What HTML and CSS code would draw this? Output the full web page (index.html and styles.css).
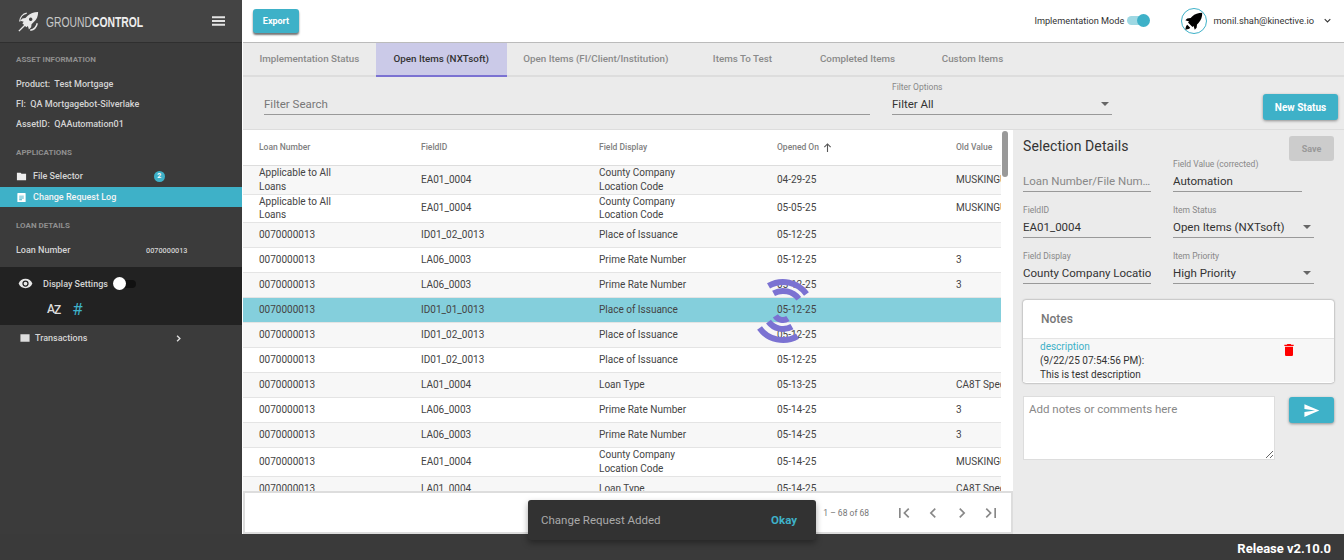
FILE: index.html
```html
<!DOCTYPE html>
<html lang="en">
<head>
  <meta charset="UTF-8">
  <title>GroundControl - Change Request Log</title>
  <link rel="stylesheet" href="styles.css">
</head>
<body>

  <div class="app">
    <aside class="sidebar">
      <div class="brand">
        <svg class="brand-logo" viewBox="0 0 24 24" width="21" height="21">
          <path fill="#e8e8e8" d="M23 1c-5 0-9 1.500-12 4.500L8.500 8 5 8.500 2.500 11l4 1.200L5 14l4.500 4.500 1.800-1.500 1.200 4 2.500-2.500.5-3.500 2.500-2.500C21.500 9.500 23 6 23 1zM16.500 9.500a2 2 0 1 1 0-.01z"/>
          <path fill="none" stroke="#e8e8e8" stroke-width="1.600" d="M1 23L8 16M10 2.500A10 10 0 0 0 2 12M22 14a10 10 0 0 1-8 8"/>
        </svg>
        <div class="brand-box"><span class="brand-name">GROUND<b>CONTROL</b></span></div>
        <svg class="menu-icon" viewBox="0 0 14 10" width="13" height="10"><path fill="#e4e4e4" d="M0 0h14v2H0zM0 4h14v2H0zM0 8h14v2H0z"/></svg>
      </div>

      <h4 class="side-title first">Asset Information</h4>
      <p class="side-line">Product:&nbsp; Test Mortgage</p>
      <p class="side-line">FI:&nbsp; QA Mortgagebot-Silverlake</p>
      <p class="side-line">AssetID:&nbsp; QAAutomation01</p>

      <h4 class="side-title apps">Applications</h4>
      <a class="side-link">
        <svg viewBox="0 0 24 24" width="11" height="11"><path fill="#eee" d="M10 4H2v16h20V6H12z"/></svg>
        File Selector
        <span class="side-badge">2</span>
      </a>
      <a class="side-link active">
        <svg viewBox="0 0 24 24" width="11" height="11"><path fill="#fff" d="M4 2h16a1 1 0 0 1 1 1v18a1 1 0 0 1-1 1H4a1 1 0 0 1-1-1V3a1 1 0 0 1 1-1zm3 6v2h10V8zm0 4v2h10v-2zm0 4v2h6v-2z"/></svg>
        Change Request Log
      </a>

      <h4 class="side-title loan">Loan Details</h4>
      <div class="loan-row"><span>Loan Number</span><b>0070000013</b></div>

      <div class="display-box">
        <div class="display-row">
          <svg viewBox="0 0 24 24" width="15" height="15"><path fill="#e8e8e8" d="M12 4.500C7 4.500 2.700 7.600 1 12c1.700 4.400 6 7.500 11 7.500s9.300-3.100 11-7.500c-1.700-4.400-6-7.500-11-7.500zM12 17a5 5 0 1 1 0-10 5 5 0 0 1 0 10zm0-8a3 3 0 1 0 0 6 3 3 0 0 0 0-6z"/></svg>
          <span>Display Settings</span>
          <span class="side-toggle"><i></i></span>
        </div>
        <div class="sort-row">
          <span class="sort-az">A<span>Z</span></span>
          <span class="sort-num">#</span>
        </div>
      </div>

      <a class="trans-row">
        <svg viewBox="0 0 24 24" width="10" height="10"><path fill="#ddd" d="M1 3h22v18H1z"/></svg>
        <span>Transactions</span>
        <svg class="trans-arrow" viewBox="0 0 10 10" width="7" height="7"><path fill="none" stroke="#ddd" stroke-width="2" d="M3 1l4 4-4 4"/></svg>
      </a>
    </aside>

    <main class="main">
      <header class="topbar">
        <button class="btn export-btn">Export</button>
        <div class="topbar-right">
          <span class="mode-label">Implementation Mode</span>
          <span class="mode-toggle"><i></i></span>
          <span class="avatar">
            <svg viewBox="0 0 24 24" width="18" height="18"><path fill="#000" d="M23 1c-5.500 0-10 1.500-13.500 5L7.500 8 3 8.500 0.500 11l5 1.500L4 14l6 6 1.500-1.500 1.500 5 2.500-2.500.5-4.500 2-2C21.500 11 23 6.500 23 1zM3 17c-1.500 1-2 3-2.500 6.500C4 23 6 22.500 7 21z"/></svg>
          </span>
          <span class="user-mail">monil.shah@kinective.io</span>
          <svg class="user-arrow" viewBox="0 0 10 6" width="7" height="5"><path fill="none" stroke="#333" stroke-width="1.500" d="M1 1l4 4 4-4"/></svg>
        </div>
      </header>

      <nav class="tabs">
        <a class="tab">Implementation Status</a>
        <a class="tab active">Open Items (NXTsoft)</a>
        <a class="tab">Open Items (FI/Client/Institution)</a>
        <a class="tab">Items To Test</a>
        <a class="tab">Completed Items</a>
        <a class="tab">Custom Items</a>
      </nav>

      <section class="filters">
        <div class="filter-search">Filter Search</div>
        <div class="filter-select">
          <label>Filter Options</label>
          <div class="select-value">Filter All <i class="caret"></i></div>
        </div>
        <button class="btn new-btn">New Status</button>
      </section>

      <section class="content">
        <div class="table-panel">
          <div class="table-scroll">
            <div class="table-wrap">
              <table class="items">
                <thead>
                  <tr>
                    <th>Loan Number</th>
                    <th>FieldID</th>
                    <th>Field Display</th>
                    <th>Opened On <svg viewBox="0 0 10 10" width="9" height="9"><path fill="none" stroke="#555" stroke-width="1.200" d="M5 10V1M1.500 4.500L5 1l3.500 3.500"/></svg></th>
                    <th>Old Value</th>
                  </tr>
                </thead>
                <tbody>
                  <tr class="tall"><td>Applicable to All<br>Loans</td><td>EA01_0004</td><td>County Company<br>Location Code</td><td>04-29-25</td><td>MUSKINGUM</td></tr>
                  <tr class="tall"><td>Applicable to All<br>Loans</td><td>EA01_0004</td><td>County Company<br>Location Code</td><td>05-05-25</td><td>MUSKINGUM</td></tr>
                  <tr><td>0070000013</td><td>ID01_02_0013</td><td>Place of Issuance</td><td>05-12-25</td><td></td></tr>
                  <tr><td>0070000013</td><td>LA06_0003</td><td>Prime Rate Number</td><td>05-12-25</td><td>3</td></tr>
                  <tr><td>0070000013</td><td>LA06_0003</td><td>Prime Rate Number</td><td>05-12-25</td><td>3</td></tr>
                  <tr class="selected"><td>0070000013</td><td>ID01_01_0013</td><td>Place of Issuance</td><td>05-12-25</td><td></td></tr>
                  <tr><td>0070000013</td><td>ID01_02_0013</td><td>Place of Issuance</td><td>05-12-25</td><td></td></tr>
                  <tr><td>0070000013</td><td>ID01_02_0013</td><td>Place of Issuance</td><td>05-12-25</td><td></td></tr>
                  <tr><td>0070000013</td><td>LA01_0004</td><td>Loan Type</td><td>05-13-25</td><td>CA8T Spec</td></tr>
                  <tr><td>0070000013</td><td>LA06_0003</td><td>Prime Rate Number</td><td>05-14-25</td><td>3</td></tr>
                  <tr><td>0070000013</td><td>LA06_0003</td><td>Prime Rate Number</td><td>05-14-25</td><td>3</td></tr>
                  <tr class="tall"><td>0070000013</td><td>EA01_0004</td><td>County Company<br>Location Code</td><td>05-14-25</td><td>MUSKINGUM</td></tr>
                  <tr><td>0070000013</td><td>LA01_0004</td><td>Loan Type</td><td>05-14-25</td><td>CA8T Spec</td></tr>
                </tbody>
              </table>
            </div>
            <div class="scroll-gutter"><div class="scroll-thumb"></div></div>
          </div>
          <div class="pager">
            <span class="pager-range">1 – 68 of 68</span>
            <svg viewBox="0 0 24 24" width="20" height="20"><path fill="#888" d="M6 6h2v12H6zM18.400 7.400L17 6l-6 6 6 6 1.400-1.400L13.800 12z"/></svg>
            <svg viewBox="0 0 24 24" width="20" height="20"><path fill="#888" d="M15.400 7.400L14 6l-6 6 6 6 1.400-1.400L10.800 12z"/></svg>
            <svg viewBox="0 0 24 24" width="20" height="20"><path fill="#888" d="M8.600 16.600L10 18l6-6-6-6-1.400 1.400L13.200 12z"/></svg>
            <svg viewBox="0 0 24 24" width="20" height="20"><path fill="#888" d="M5.600 7.400L7 6l6 6-6 6-1.400-1.400L10.200 12zM16 6h2v12h-2z"/></svg>
          </div>
        </div>

        <div class="details">
          <div class="details-head">
            <h2>Selection Details</h2>
            <button class="btn save-btn">Save</button>
          </div>
          <div class="details-grid">
            <div class="field narrow"><label></label><div class="field-value empty">Loan Number/File Number</div></div>
            <div class="field short"><label>Field Value (corrected)</label><div class="field-value">Automation</div></div>
            <div class="field narrow"><label>FieldID</label><div class="field-value">EA01_0004</div></div>
            <div class="field"><label>Item Status</label><div class="field-value">Open Items (NXTsoft) <i class="caret"></i></div></div>
            <div class="field narrow"><label>Field Display</label><div class="field-value clip">County Company Location Code</div></div>
            <div class="field"><label>Item Priority</label><div class="field-value">High Priority <i class="caret"></i></div></div>
          </div>

          <div class="notes">
            <h3>Notes</h3>
            <div class="note">
              <div>
                <span class="note-type">description</span>
                <p>(9/22/25 07:54:56 PM):</p>
                <p>This is test description</p>
              </div>
              <svg viewBox="0 0 24 24" width="16" height="16"><path fill="#f00" d="M6 19c0 1.100.9 2 2 2h8c1.100 0 2-.9 2-2V7H6zM19 4h-3.500l-1-1h-5l-1 1H5v2h14z"/></svg>
            </div>
          </div>

          <div class="note-input">
            <textarea placeholder="Add notes or comments here"></textarea>
            <button class="btn send-btn">
              <svg viewBox="0 0 24 24" width="17" height="17"><path fill="#fff" d="M2 21l21-9L2 3v7l15 2-15 2z"/></svg>
            </button>
          </div>
        </div>
      </section>
    </main>
  </div>

  <footer class="footer">Release v2.10.0</footer>

  <!-- overlays -->
  <svg class="spinner" viewBox="0 0 70 70" width="70" height="70">
    <g fill="none" stroke="#7b72d2" stroke-width="6" transform="rotate(12 35 35)">
      <path d="M15.600 13.400A29 29 0 0 1 54.400 13.400"/>
      <path d="M22.100 19.700A20 20 0 0 1 47.900 19.700"/>
      <path d="M28.600 41.400A9 9 0 0 0 41.400 41.400"/>
      <path d="M23 48.400A18 18 0 0 0 47 48.400"/>
      <path d="M15.600 56.600A29 29 0 0 0 54.400 56.600"/>
    </g>
  </svg>

  <div class="snackbar">
    <span>Change Request Added</span>
    <b>Okay</b>
  </div>

</body>
</html>
```

FILE: styles.css
```css
* { box-sizing: border-box; margin: 0; padding: 0; }

body {
  font-family: Roboto, Arial, sans-serif;
  height: 560px;
  overflow: hidden;
  background-color: #3a3a3a;
  color: #333;
}

.app {
  display: flex;
  height: 534px;
}

.footer {
  height: 26px;
  background-color: #3a3a3a;
  color: white;
  font-size: 13px;
  font-weight: 700;
  line-height: 30px;
  text-align: right;
  padding-right: 13px;
}

/* sidebar */
.sidebar {
  width: 243px;
  flex-shrink: 0;
  background-color: #3b3b3b;
  color: #d4d4d4;
  border-right: 1px solid #fff;
}

.brand {
  height: 43px;
  display: flex;
  align-items: center;
  padding: 0 17px 0 18px;
  background-color: #444;
  border-bottom: 1px solid #2f2f2f;
}

.brand-box {
  flex-grow: 1;
  margin-left: 7px;
  height: 18px;
  overflow: hidden;
}

.brand-name {
  display: inline-block;
  font-family: "Liberation Sans", Arial, sans-serif;
  font-size: 15px;
  line-height: 18px;
  white-space: nowrap;
  color: #c8c8c8;
  transform: scaleX(0.69);
  transform-origin: left center;
}

.brand-name b { color: #eee; }

.side-title {
  font-size: 8px;
  font-weight: 700;
  text-transform: uppercase;
  color: #8f8f8f;
  padding-left: 16px;
  line-height: 10px;
}

.side-title.first { margin-top: 12px; margin-bottom: 9px; }
.side-title.apps { margin-top: 14px; margin-bottom: 8px; }
.side-title.loan { margin-top: 14px; margin-bottom: 7px; }

.side-line {
  font-size: 9px;
  font-weight: 500;
  padding-left: 16px;
  height: 20px;
  line-height: 20px;
}

.side-link {
  display: flex;
  align-items: center;
  gap: 6px;
  height: 20px;
  padding-left: 16px;
  font-size: 9px;
  font-weight: 500;
}

.side-link.active {
  background-color: #3eb1c8;
  color: #f4f4f4;
  margin-top: 1px;
}

.side-badge {
  width: 11px;
  height: 11px;
  margin-left: 65px;
  border-radius: 50%;
  background-color: #3eb1c8;
  color: white;
  font-size: 7px;
  font-weight: 700;
  line-height: 11px;
  text-align: center;
}

.loan-row {
  display: flex;
  height: 24px;
  align-items: center;
  padding-left: 16px;
  font-size: 9px;
  font-weight: 500;
}

.loan-row span { width: 130px; }
.loan-row b { font-size: 7.300px; font-weight: 500; }

.display-box {
  background-color: #222;
  height: 58px;
  margin-top: 5px;
}

.display-row {
  display: flex;
  align-items: center;
  height: 33px;
  padding-left: 18px;
  font-size: 9px;
  font-weight: 500;
}

.display-row span:first-of-type { margin-left: 10px; }

.side-toggle {
  position: relative;
  width: 22px;
  height: 8px;
  margin-left: 6px;
  background-color: #111;
  border-radius: 4px;
}

.side-toggle i {
  position: absolute;
  left: -1px;
  top: -2.500px;
  width: 13px;
  height: 13px;
  border-radius: 50%;
  background-color: white;
}

.sort-row {
  display: flex;
  align-items: center;
  padding-left: 47px;
  gap: 12px;
  height: 18px;
}

.sort-az {
  font-size: 12px;
  font-weight: 500;
  letter-spacing: -1px;
  color: #ddd;
}

.sort-az span { position: relative; top: 1px; }

.sort-num {
  font-size: 17px;
  color: #3eb1c8;
}

.trans-row {
  display: flex;
  align-items: center;
  height: 26px;
  padding-left: 20px;
  font-size: 9px;
  font-weight: 500;
}

.trans-row span {
  margin-left: 5px;
  width: 140px;
}

/* main */
.main {
  flex-grow: 1;
  display: flex;
  flex-direction: column;
  min-width: 0;
  background-color: #ebebeb;
}

.topbar {
  height: 43px;
  flex-shrink: 0;
  display: flex;
  align-items: center;
  justify-content: space-between;
  padding: 0 13px 1px 10px;
  background-color: white;
  border-bottom: 1px solid #bbb;
}

.btn {
  border: none;
  border-radius: 3px;
  background-color: #3eb1c8;
  color: white;
  font-family: Roboto, Arial, sans-serif;
  font-size: 9px;
  font-weight: 700;
  box-shadow: 0 1px 3px rgba(0, 0, 0, 0.4);
}

.export-btn {
  width: 46px;
  height: 24px;
  box-shadow: 0 2px 2px rgba(0, 0, 0, 0.55);
}

.topbar-right {
  display: flex;
  align-items: center;
}

.mode-label {
  font-size: 9.200px;
  margin-right: 3px;
}

.mode-toggle {
  position: relative;
  width: 22px;
  height: 9px;
  margin-right: 32px;
  background-color: #9ed8e3;
  border-radius: 5px;
}

.mode-toggle i {
  position: absolute;
  right: -1px;
  top: -2px;
  width: 13px;
  height: 13px;
  border-radius: 50%;
  background-color: #3eb1c8;
}

.avatar {
  display: flex;
  align-items: center;
  justify-content: center;
  width: 26px;
  height: 26px;
  border: 1px solid #3eb1c8;
  border-radius: 50%;
  margin-right: 6px;
}

.user-mail {
  font-size: 9.300px;
  margin-right: 10px;
}

/* tabs */
.tabs {
  height: 34px;
  flex-shrink: 0;
  display: flex;
  border-bottom: 2px solid #ddd;
}

.tab {
  min-width: 115px;
  padding: 0 16.500px;
  text-align: center;
  font-size: 9.800px;
  font-weight: 500;
  line-height: 31px;
  color: #8a8a8a;
}

.tab.active {
  min-width: 131px;
  background-color: #cbcae8;
  color: #333;
  border-bottom: 2px solid #7b72d2;
  height: 34px;
}

/* filter row */
.filters {
  height: 53px;
  flex-shrink: 0;
  display: flex;
  align-items: flex-start;
  padding-left: 21px;
  border-bottom: 1px solid #ddd;
}

.filter-search {
  width: 606px;
  margin-top: 15px;
  height: 23px;
  font-size: 11.500px;
  line-height: 24px;
  color: #777;
  border-bottom: 1px solid #999;
}

.filter-select {
  width: 220px;
  margin-left: 22px;
  margin-top: 5px;
}

.filter-select label,
.field label {
  display: block;
  height: 10px;
  font-size: 8.500px;
  line-height: 10px;
  color: #888;
}

.select-value {
  position: relative;
  height: 23px;
  font-size: 11.500px;
  line-height: 24px;
  border-bottom: 1px solid #999;
}

.caret {
  position: absolute;
  right: 3px;
  top: 10px;
  border-left: 4px solid transparent;
  border-right: 4px solid transparent;
  border-top: 4px solid #666;
}

.new-btn {
  width: 75px;
  height: 26px;
  margin-left: 151px;
  margin-top: 17px;
  font-size: 10px;
}

/* table */
.content {
  flex-grow: 1;
  display: flex;
  min-height: 0;
}

.table-panel {
  width: 770px;
  flex-shrink: 0;
  display: flex;
  flex-direction: column;
}

.table-scroll {
  flex-grow: 1;
  min-height: 0;
  display: flex;
  overflow: hidden;
  background-color: white;
}

.table-wrap {
  width: 758px;
  flex-shrink: 0;
}

.scroll-gutter {
  flex-grow: 1;
  padding: 1px 0 0 1px;
}

.scroll-thumb {
  width: 6px;
  height: 46px;
  border-radius: 3px;
  background-color: #999;
}

.items {
  width: 758px;
  table-layout: fixed;
  border-collapse: collapse;
}

.items th:nth-child(1) { width: 162px; }
.items th:nth-child(2) { width: 178px; }
.items th:nth-child(3) { width: 178px; }
.items th:nth-child(4) { width: 179px; }
.items th:nth-child(5) { width: 61px; }

.items th {
  height: 35px;
  padding-left: 16px;
  text-align: left;
  font-size: 8.500px;
  font-weight: 500;
  color: #808080;
  border-bottom: 1px solid #ddd;
}

.items th svg { vertical-align: -1.500px; margin-left: 2px; }

.items td {
  padding-left: 16px;
  height: 25px;
  font-size: 10px;
  line-height: 14px;
  color: #444;
  white-space: nowrap;
  overflow: hidden;
  border-bottom: 1px solid #e4e4e4;
}

.items tr.tall td { height: 29px; }
.items tr.tall + tr.tall td { height: 28px; line-height: 13.500px; }

.items tbody tr:nth-child(odd) { background-color: #f7f7f7; }
.items tbody tr.selected { background-color: #84cfdc; }

.pager {
  height: 43px;
  flex-shrink: 0;
  display: flex;
  align-items: center;
  justify-content: flex-end;
  gap: 9px;
  padding-right: 10px;
  background-color: white;
  border: 2px solid #ddd;
}

.pager-range {
  font-size: 8.500px;
  color: #777;
  margin-right: 16px;
}

/* details */
.details {
  flex-grow: 1;
  padding: 6px 10px 0;
}

.details-head {
  display: flex;
  justify-content: space-between;
  height: 23px;
}

.details-head h2 {
  font-size: 14px;
  font-weight: 400;
  letter-spacing: 0.100px;
  line-height: 20px;
}

.save-btn {
  width: 45px;
  height: 25px;
  background-color: #ccc;
  color: #999;
  box-shadow: none;
}

.details-grid {
  display: grid;
  grid-template-columns: 128px 141px;
  column-gap: 22px;
  row-gap: 13px;
}

.field {
  height: 33px;
  position: relative;
}

.field.short { width: 129px; }

.field-value {
  position: relative;
  height: 23px;
  font-size: 11.500px;
  line-height: 24px;
  border-bottom: 1px solid #999;
  white-space: nowrap;
  overflow: hidden;
  text-overflow: ellipsis;
}

.field-value.clip { text-overflow: clip; }
.field-value.empty { color: #888; }

.notes {
  margin-top: 16px;
  height: 83px;
  background-color: white;
  border-radius: 3px;
  box-shadow: 0 0 2px rgba(0, 0, 0, 0.5);
}

.notes h3 {
  height: 39px;
  padding-left: 18px;
  font-size: 12px;
  font-weight: 500;
  line-height: 38px;
  color: #777;
  border-bottom: 1px solid #e4e4e4;
}

.note {
  display: flex;
  justify-content: space-between;
  height: 43px;
  padding: 1px 37px 0 17px;
  font-size: 10px;
  line-height: 14px;
  background-color: #f7f7f7;
}

.note svg { margin-top: 2px; }
.note-type { color: #3eb1c8; }

.note-input {
  display: flex;
  justify-content: space-between;
  align-items: flex-start;
  margin-top: 13px;
}

.note-input textarea {
  width: 252px;
  height: 64px;
  padding: 5px;
  font-family: Roboto, Arial, sans-serif;
  font-size: 11.500px;
  border: 1px solid #ddd;
  background-color: white;
}

.note-input textarea::placeholder { color: #888; }

.send-btn {
  width: 45px;
  height: 26px;
  margin-top: 1px;
  display: flex;
  align-items: center;
  justify-content: center;
}

/* overlays */
.spinner {
  position: absolute;
  left: 748px;
  top: 276px;
}

.snackbar {
  position: absolute;
  left: 528px;
  top: 500px;
  width: 288px;
  height: 40px;
  display: flex;
  align-items: center;
  justify-content: space-between;
  padding: 0 19px 0 13px;
  background-color: #323232;
  border-radius: 3px;
  box-shadow: 0 3px 6px rgba(0, 0, 0, 0.35);
  font-size: 11.500px;
  color: #aaa;
}

.snackbar b {
  color: #3eb1c8;
  font-weight: 700;
}
```
